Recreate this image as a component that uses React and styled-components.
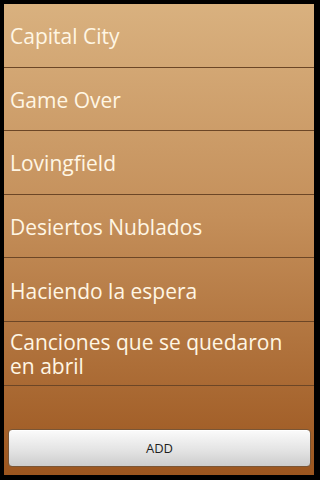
import React from 'react';
import styled, { createGlobalStyle } from 'styled-components';

const GlobalStyle = createGlobalStyle`
  html, body {
    margin: 0;
    padding: 0;
    background: #000;
  }
  * {
    box-sizing: border-box;
  }
`;

const SONGS = [
  'Capital City',
  'Game Over',
  'Lovingfield',
  'Desiertos Nublados',
  'Haciendo la espera',
  'Canciones que se quedaron en abril',
];

const Screen = styled.div`
  width: 320px;
  height: 480px;
  padding: 4px 6px 5px 4px;
  background: #000;
`;

const Panel = styled.main`
  height: 100%;
  display: flex;
  flex-direction: column;
  background: linear-gradient(to bottom, #d9b17f 0%, #c48f5a 45%, #9c561f 100%);
`;

const List = styled.ul`
  list-style: none;
  margin: 0;
  padding: 0;
  flex: 1;
`;

const Row = styled.li`
  height: 63.6px;
  display: flex;
  align-items: center;
  padding: 2px 8px 0 6px;
  border-bottom: 1px solid #6c4626;
  font-family: 'Open Sans', 'Noto Sans', sans-serif;
  font-size: 21px;
  line-height: 24px;
  color: #fff6e4;
`;

const Footer = styled.div`
  padding: 0 3px 8px 4px;
`;

const AddButton = styled.button`
  width: 100%;
  height: 38px;
  border: 1px solid #7a5636;
  border-radius: 4px;
  background: linear-gradient(to bottom, #fbfbfb 0%, #e4e4e4 55%, #cdcdcd 100%);
  box-shadow: inset 0 1px 0 #fff;
  font-family: 'Open Sans', 'Noto Sans', sans-serif;
  font-size: 13px;
  color: #1e1e1e;
  cursor: pointer;
`;

const App = () => (
  <>
    <GlobalStyle />
    <Screen>
      <Panel>
        <List>
          {SONGS.map((song) => (
            <Row key={song}>{song}</Row>
          ))}
        </List>
        <Footer>
          <AddButton>ADD</AddButton>
        </Footer>
      </Panel>
    </Screen>
  </>
);

export default App;
